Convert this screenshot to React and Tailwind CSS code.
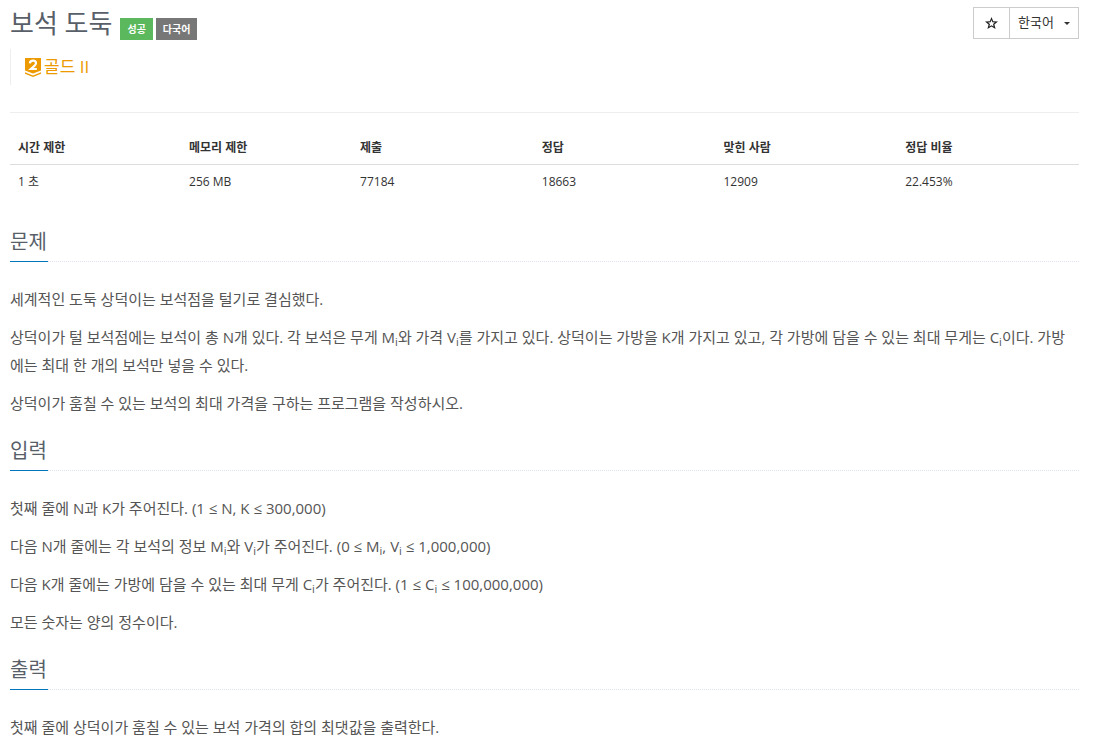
import React from "react";

const stats = [
  ["시간 제한", "1 초", "w-[16%]"],
  ["메모리 제한", "256 MB", "w-[16%]"],
  ["제출", "77184", "w-[17%]"],
  ["정답", "18663", "w-[17%]"],
  ["맞힌 사람", "12909", "w-[17%]"],
  ["정답 비율", "22.453%", "w-[17%]"],
];

function Sub({ children }) {
  return <sub className="text-[11px] leading-none">{children}</sub>;
}

function StarIcon() {
  return (
    <svg viewBox="0 0 13 12" className="h-3 w-[13px]" fill="#222" fillRule="evenodd" aria-hidden="true">
      <path d="M6.5 0L8.2 4.2L13 4.5L9.4 7.4L10.6 12L6.5 9.5L2.4 12L3.6 7.4L0 4.5L4.8 4.2ZM6.5 2.9L5.6 5.2L3.1 5.4L5 7L4.4 9.5L6.5 8.2L8.6 9.5L8 7L9.9 5.4L7.4 5.2Z" />
    </svg>
  );
}

function TierBadge() {
  return (
    <svg viewBox="0 0 16 19" className="h-[19px] w-4" fill="#ec9a00" aria-hidden="true">
      <path d="M0 0H16V12.6L8 15.6L0 12.6Z" />
      <path d="M0 14.2L8 17.4L16 14.2V15.8L8 19L0 15.8Z" />
      <path
        d="M4.9 5.4C5 3.5 6.2 2.7 8 2.7C9.9 2.7 11 3.6 11 5.1C11 6.2 10.4 7 9.4 7.9L6 11H11.8"
        fill="none"
        stroke="#fff"
        strokeWidth="2.2"
      />
    </svg>
  );
}

function Section({ title, children }) {
  return (
    <section className="mb-[18px]">
      <div className="mb-[23px] border-b border-dotted border-[#dfe3ee]">
        <h2 className="-mb-px inline-block border-b border-[#0076bd] pr-px pb-[3px] align-top text-xl leading-8 text-[#585f69]">
          {title}
        </h2>
      </div>
      <div className="flex flex-col gap-[10px] pr-1 text-[15px] leading-7 text-[#555]">{children}</div>
    </section>
  );
}

export default function App() {
  return (
    <main className="bg-white pr-[27px] pl-[10px] font-['Open_Sans','Noto_Sans_CJK_KR',sans-serif] text-[#333]">
      <header className="flex items-start justify-between border-b border-[#eee] pt-[7px] pb-[27px]">
        <div>
          <div className="flex items-end gap-[3px]">
            <h1 className="mr-[5px] text-[26px] leading-[33px] text-[#585f69]">보석 도둑</h1>
            <span className="bg-[#5cb85c] px-[7px] text-[10px] leading-[22px] font-bold text-white">성공</span>
            <span className="bg-[#777] px-[7px] text-[10px] leading-[22px] font-bold text-white">다국어</span>
          </div>
          <blockquote className="mt-[9px] flex h-9 items-center gap-[3px] border-l border-[#eee] pl-[14px] text-[17px] leading-6 text-[#ec9a00]">
            <TierBadge />
            <a href="#tier">골드 II</a>
          </blockquote>
        </div>
        <div className="flex h-8 border border-[#ccc] text-[13px]">
          <button type="button" aria-label="즐겨찾기" className="flex w-9 items-center justify-center border-r border-[#ccc]">
            <StarIcon />
          </button>
          <label className="relative flex items-center">
            <select aria-label="언어" className="h-full appearance-none pr-6 pl-2 outline-none">
              <option>한국어</option>
            </select>
            <svg viewBox="0 0 6 3" className="pointer-events-none absolute right-2 h-[3px] w-[6px]" fill="#333" aria-hidden="true">
              <path d="M0 0H6L3 3Z" />
            </svg>
          </label>
        </div>
      </header>

      <table className="mt-[17px] mb-7 w-full table-fixed text-left text-xs leading-[17px]">
        <thead>
          <tr className="border-b border-[#ddd]">
            {stats.map(([name, , width]) => (
              <th key={name} className={`${width} px-2 pt-[9px] pb-2 font-bold`}>{name}</th>
            ))}
          </tr>
        </thead>
        <tbody>
          <tr>
            {stats.map(([name, value]) => (
              <td key={name} className="p-2">{value}</td>
            ))}
          </tr>
        </tbody>
      </table>

      <Section title="문제">
        <p>세계적인 도둑 상덕이는 보석점을 털기로 결심했다.</p>
        <p>
          상덕이가 털 보석점에는 보석이 총 N개 있다. 각 보석은 무게 M<Sub>i</Sub>와 가격 V<Sub>i</Sub>를 가지고 있다.
          상덕이는 가방을 K개 가지고 있고, 각 가방에 담을 수 있는 최대 무게는 C<Sub>i</Sub>이다. 가방에는 최대 한 개의
          보석만 넣을 수 있다.
        </p>
        <p>상덕이가 훔칠 수 있는 보석의 최대 가격을 구하는 프로그램을 작성하시오.</p>
      </Section>

      <Section title="입력">
        <p>첫째 줄에 N과 K가 주어진다. (1 ≤ N, K ≤ 300,000)</p>
        <p>
          다음 N개 줄에는 각 보석의 정보 M<Sub>i</Sub>와 V<Sub>i</Sub>가 주어진다. (0 ≤ M<Sub>i</Sub>, V<Sub>i</Sub> ≤
          1,000,000)
        </p>
        <p>
          다음 K개 줄에는 가방에 담을 수 있는 최대 무게 C<Sub>i</Sub>가 주어진다. (1 ≤ C<Sub>i</Sub> ≤ 100,000,000)
        </p>
        <p>모든 숫자는 양의 정수이다.</p>
      </Section>

      <Section title="출력">
        <p>첫째 줄에 상덕이가 훔칠 수 있는 보석 가격의 합의 최댓값을 출력한다.</p>
      </Section>
    </main>
  );
}
